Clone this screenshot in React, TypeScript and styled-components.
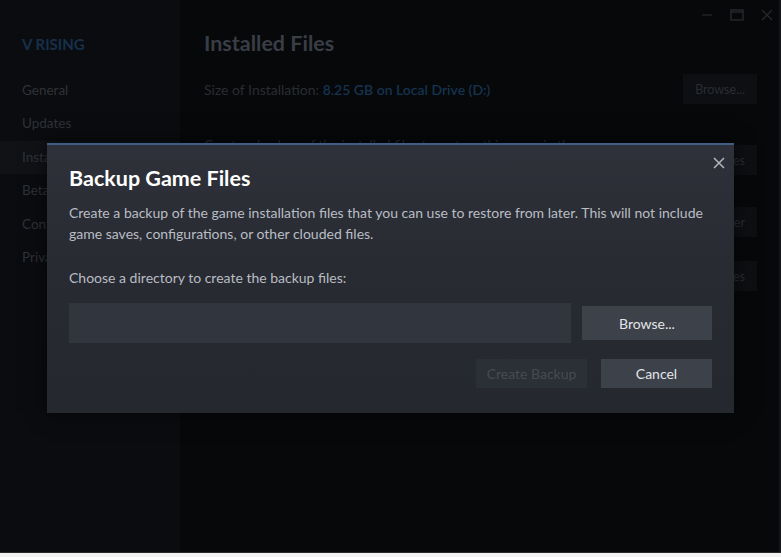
import React from "react";
import styled, { createGlobalStyle } from "styled-components";

const Global = createGlobalStyle`
  html, body { margin: 0; padding: 0; background: #08090c; }
  body { font-family: Lato, "Noto Sans", sans-serif; overflow: hidden; }
`;

const Screen = styled.div`
  position: relative;
  width: 781px;
  height: 557px;
  display: flex;
  flex-direction: column;
  overflow: hidden;
`;

const Window = styled.div`
  flex: 1;
  display: flex;
  background: #07080a;
  border-right: 2px solid #141519;
`;

const BottomStrip = styled.div`
  height: 4px;
  background: #f2f2f2;
  border-top: 1px solid #2a2a2a;
`;

const Sidebar = styled.nav`
  width: 180px;
  background: #0b0c0f;
  display: flex;
  flex-direction: column;
  padding-top: 33px;
`;

const GameTitle = styled.div`
  font-size: 15px;
  font-weight: 700;
  color: #16304c;
  padding-left: 22px;
  height: 22px;
  line-height: 22px;
  margin-bottom: 19px;
`;

const NavItem = styled.div<{ $active?: boolean }>`
  height: 33.4px;
  line-height: 33.4px;
  padding-left: 22px;
  font-size: 13.5px;
  color: #2f3237;
  background: ${(p) => (p.$active ? "#101216" : "transparent")};
`;

const Main = styled.main`
  flex: 1;
  display: flex;
  flex-direction: column;
  padding: 29px 22px 0 24px;
`;

const TitleBar = styled.div`
  position: absolute;
  top: 6px;
  right: 6px;
  display: flex;
  gap: 14px;
  color: #25282d;
`;

const WinBtn = styled.div`
  width: 16px;
  height: 18px;
  display: flex;
  align-items: center;
  justify-content: center;
`;

const Heading = styled.h1`
  margin: 0 0 17px 0;
  font-size: 21.5px;
  font-weight: 700;
  color: #393d45;
  line-height: 28px;
`;

const Row = styled.div`
  display: flex;
  align-items: center;
  justify-content: space-between;
  height: 30px;
`;

const Label = styled.span`
  font-size: 14px;
  color: #2a2d32;
`;

const Value = styled.span`
  color: #15334f;
  font-weight: 600;
`;

const GhostButton = styled.div<{ $mt?: number }>`
  margin-top: ${(p) => p.$mt ?? 0}px;
  min-width: 48px;
  padding: 0 12px;
  height: 30px;
  background: #0d0f12;
  color: #2a2d32;
  font-size: 12.5px;
  white-space: nowrap;
  display: flex;
  align-items: center;
  justify-content: center;
`;

const SectionText = styled.div`
  margin-top: 31px;
  font-size: 13.5px;
  color: #2a2d32;
  line-height: 20px;
`;

const SideButtons = styled.div`
  display: flex;
  flex-direction: column;
  align-items: flex-end;
`;

const Modal = styled.div`
  position: absolute;
  left: 47px;
  top: 143px;
  width: 687px;
  height: 270px;
  box-sizing: border-box;
  border-top: 2px solid #3f5e86;
  background: linear-gradient(180deg, #2e3139 0%, #272a31 55%, #25282e 100%);
  box-shadow: 0 0 20px rgba(0, 0, 0, 0.6);
  padding: 20px 22px 0 22px;
  display: flex;
  flex-direction: column;
`;

const CloseX = styled.div`
  position: absolute;
  top: 9px;
  right: 8px;
  width: 14px;
  height: 14px;
  color: #b3b7bd;
`;

const ModalTitle = styled.h2`
  margin: 0;
  font-size: 21.5px;
  font-weight: 700;
  color: #ffffff;
  line-height: 26px;
`;

const Body = styled.p`
  margin: 11px 0 0 0;
  font-size: 14px;
  line-height: 21px;
  color: #b9bdc4;
`;

const Prompt = styled.p`
  margin: 23px 0 0 0;
  font-size: 14px;
  line-height: 21px;
  color: #b9bdc4;
`;

const InputRow = styled.div`
  margin-top: 15px;
  display: flex;
  align-items: center;
  gap: 11px;
`;

const Input = styled.div`
  flex: 1;
  height: 40px;
  background: #31353d;
`;

const Button = styled.div<{ $disabled?: boolean; $w: number }>`
  width: ${(p) => p.$w}px;
  height: 34px;
  background: ${(p) => (p.$disabled ? "#2b2f36" : "#3d414a")};
  color: ${(p) => (p.$disabled ? "#474b53" : "#e2e5e9")};
  font-size: 14px;
  display: flex;
  align-items: center;
  justify-content: center;
`;

const Actions = styled.div`
  margin-top: 16px;
  display: flex;
  justify-content: flex-end;
  align-items: center;
  gap: 14px;
`;

const ActionButton = styled(Button)`
  height: 29px;
`;

export default function App() {
  return (
    <>
      <Global />
      <Screen>
        <Window>
          <Sidebar>
            <GameTitle>V RISING</GameTitle>
            <NavItem>General</NavItem>
            <NavItem>Updates</NavItem>
            <NavItem $active>Installed Files</NavItem>
            <NavItem>Betas</NavItem>
            <NavItem>Controller</NavItem>
            <NavItem>Privacy</NavItem>
          </Sidebar>
          <Main>
            <Heading>Installed Files</Heading>
            <Row>
              <Label>
                Size of Installation: <Value>8.25 GB on Local Drive (D:)</Value>
              </Label>
              <GhostButton>Browse...</GhostButton>
            </Row>
            <SectionText>Create a backup of the installed files to restore this game in the</SectionText>
            <SideButtons>
              <GhostButton $mt={-10}>Backup Files</GhostButton>
              <GhostButton $mt={32}>Move Install Folder</GhostButton>
              <GhostButton $mt={24}>Verify integrity of game files</GhostButton>
            </SideButtons>
          </Main>
          <TitleBar>
            <WinBtn>
              <svg width="12" height="12" viewBox="0 0 12 12"><path d="M1 6h10" stroke="currentColor" strokeWidth="1.2" /></svg>
            </WinBtn>
            <WinBtn>
              <svg width="14" height="12" viewBox="0 0 14 12"><rect x="1" y="1" width="12" height="10" fill="none" stroke="currentColor" strokeWidth="1.4" /><path d="M1 3h12" stroke="currentColor" strokeWidth="1.4" /></svg>
            </WinBtn>
            <WinBtn>
              <svg width="12" height="12" viewBox="0 0 12 12"><path d="M1 1l10 10M11 1L1 11" stroke="currentColor" strokeWidth="1.3" /></svg>
            </WinBtn>
          </TitleBar>
        </Window>
        <BottomStrip />
        <Modal>
          <CloseX>
            <svg width="14" height="14" viewBox="0 0 14 14"><path d="M2 2l10 10M12 2L2 12" stroke="currentColor" strokeWidth="1.5" /></svg>
          </CloseX>
          <ModalTitle>Backup Game Files</ModalTitle>
          <Body>
            Create a backup of the game installation files that you can use to restore from later. This will not include
            game saves, configurations, or other clouded files.
          </Body>
          <Prompt>Choose a directory to create the backup files:</Prompt>
          <InputRow>
            <Input />
            <Button $w={130}>Browse...</Button>
          </InputRow>
          <Actions>
            <ActionButton $disabled $w={111}>Create Backup</ActionButton>
            <ActionButton $w={111}>Cancel</ActionButton>
          </Actions>
        </Modal>
      </Screen>
    </>
  );
}
